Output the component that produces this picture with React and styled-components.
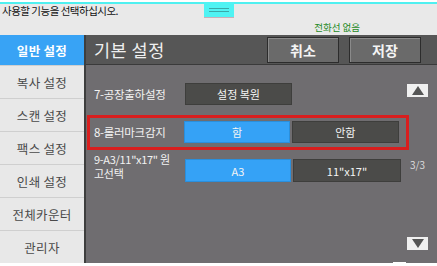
import React from 'react';
import styled, { createGlobalStyle } from 'styled-components';

const Global = createGlobalStyle`
  html, body { margin: 0; padding: 0; background: #ffffff; }
  * { box-sizing: border-box; }
  body { font-family: "Noto Sans CJK KR", "Noto Sans", sans-serif; }
`;

const Screen = styled.div`
  width: 437px;
  height: 266px;
  background: #ffffff;
  position: relative;
  overflow: hidden;
  display: flex;
  flex-direction: column;
`;

const TopBar = styled.div`
  height: 35px;
  position: relative;
  background: #e9e9e9;
  border-top: 2px solid #ffffff;
  padding: 2px 2px 0 2px;
  display: flex;
  flex-direction: column;
  &::before {
    content: "";
    position: absolute;
    left: 0;
    right: 0;
    top: 0;
    height: 2px;
    background: #4ff0f0;
  }
`;

const Message = styled.div`
  font-size: 10.5px;
  letter-spacing: -0.5px;
  color: #111;
  line-height: 14px;
`;

const LineStatus = styled.div`
  align-self: flex-end;
  margin-right: 75px;
  margin-top: 4px;
  font-size: 9.5px;
  color: #1f8a1f;
  line-height: 10px;
`;

const Handle = styled.div`
  position: absolute;
  left: 204px;
  top: 0;
  width: 30px;
  height: 15px;
  background: #4ff3f3;
  box-shadow: 0 1px 0 #c8b0b8;
  display: flex;
  flex-direction: column;
  align-items: center;
  justify-content: center;
  gap: 2px;
  span {
    display: block;
    width: 20px;
    height: 1px;
    background: #3aa8a8;
  }
`;

const Body = styled.div`
  display: flex;
  height: 228px;
`;

const Sidebar = styled.div`
  width: 86px;
  display: flex;
  flex-direction: column;
  background: #e6e6e6;
  border-right: 2px solid #3e3e3e;
`;

const SideItem = styled.div`
  height: ${(p) => (p.$active ? 30 : 33)}px;
  display: flex;
  align-items: center;
  justify-content: center;
  font-size: 12.5px;
  font-weight: ${(p) => (p.$active ? 700 : 400)};
  color: ${(p) => (p.$active ? '#ffffff' : '#4a4a4a')};
  background: ${(p) => (p.$active ? '#38a3f5' : '#e8e8e8')};
  border-top: ${(p) => (p.$active ? 'none' : '1px solid #cfcfcf')};
  letter-spacing: 0.3px;
`;

const Main = styled.div`
  flex: 1;
  display: flex;
  flex-direction: column;
`;

const Header = styled.div`
  height: 30px;
  background: #565656;
  border-bottom: 1px solid #3a3a3a;
  display: flex;
  align-items: center;
  padding: 0 16px 0 8px;
  gap: 10px;
`;

const Title = styled.div`
  flex: 1;
  color: #efefef;
  font-size: 17.5px;
  letter-spacing: 0.5px;
`;

const HeadButton = styled.div`
  width: 72px;
  height: 26px;
  background: #6a6a6a;
  border: 1px solid #2c2c2c;
  box-shadow: inset 1px 1px 0 #8a8a8a;
  color: #f4f4f4;
  font-weight: 700;
  font-size: 14px;
  display: flex;
  align-items: center;
  justify-content: center;
`;

const Content = styled.div`
  flex: 1;
  background: #6f6d70;
  display: flex;
`;

const Rows = styled.div`
  width: 323px;
  padding-top: 18px;
  display: flex;
  flex-direction: column;
`;

const Row = styled.div`
  display: flex;
  align-items: center;
  padding-left: 8px;
  margin-bottom: ${(p) => p.$gap || 0}px;
`;

const Highlight = styled.div`
  display: flex;
  align-items: center;
  margin-left: 1px;
  width: 322px;
  height: 35px;
  border: 3px solid #d81e1e;
  padding: 3px 5px 4px 4px;
  margin-bottom: 9px;
`;

const Label = styled.div`
  width: 91px;
  color: #f2f2f2;
  font-size: 11.5px;
  line-height: 13px;
  letter-spacing: -0.3px;
  margin-top: ${(p) => p.$shift || 0}px;
  display: flex;
  flex-direction: column;
  span {
    display: block;
    font-size: 11px;
    height: 14px;
    line-height: 14px;
    white-space: nowrap;
  }
`;

const Choice = styled.div`
  width: ${(p) => p.$w || 106}px;
  height: ${(p) => p.$h || 22}px;
  margin-right: 2px;
  background: ${(p) => (p.$on ? '#35a2f6' : '#4b4b49')};
  border: 1px solid ${(p) => (p.$on ? '#2a8fdc' : '#3e3e3c')};
  color: #f4f4f4;
  font-size: 11px;
  display: flex;
  align-items: center;
  justify-content: center;
`;

const Scroll = styled.div`
  width: 26px;
  display: flex;
  flex-direction: column;
  padding: 19px 0 13px 0;
  margin-left: -2px;
`;

const Arrow = styled.div`
  width: 21px;
  height: 13px;
  background: #f0f0f0;
  display: flex;
  align-items: center;
  justify-content: center;
  margin-top: ${(p) => (p.$down ? 'auto' : '0')};
  &::after {
    content: "";
    width: 0;
    height: 0;
    border-left: 6px solid transparent;
    border-right: 6px solid transparent;
    ${(p) => (p.$down ? 'border-top' : 'border-bottom')}: 9px solid #555;
  }
`;

const Page = styled.div`
  margin-top: 62px;
  padding-left: 3px;
  color: #dcdcdc;
  font-size: 10px;
  line-height: 12px;
`;

const Notch = styled.div`
  position: absolute;
  left: 393px;
  top: 262px;
  width: 13px;
  height: 4px;
  background: #ffffff;
`;

const sideItems = ['복사 설정', '스캔 설정', '팩스 설정', '인쇄 설정', '전체카운터', '관리자'];

export default function App() {
  return (
    <>
      <Global />
      <Screen>
        <TopBar>
          <Message>사용할 기능을 선택하십시오.</Message>
          <LineStatus>전화선 없음</LineStatus>
          <Handle>
            <span />
            <span />
          </Handle>
        </TopBar>
        <Body>
          <Sidebar>
            <SideItem $active>일반 설정</SideItem>
            {sideItems.map((s) => (
              <SideItem key={s}>{s}</SideItem>
            ))}
          </Sidebar>
          <Main>
            <Header>
              <Title>기본 설정</Title>
              <HeadButton>취소</HeadButton>
              <HeadButton>저장</HeadButton>
            </Header>
            <Content>
              <Rows>
                <Row $gap={10}>
                  <Label>7-공장출하설정</Label>
                  <Choice $w={107}>설정 복원</Choice>
                </Row>
                <Highlight>
                  <Label>8-롤러마크감지</Label>
                  <Choice $on>함</Choice>
                  <Choice $w={108}>안함</Choice>
                </Highlight>
                <Row>
                  <Label $shift={-9}>
                    <span>9-A3/11"x17" 원</span>
                    <span>고선택</span>
                  </Label>
                  <Choice $on $h={23}>A3</Choice>
                  <Choice $w={108} $h={23}>11"x17"</Choice>
                </Row>
              </Rows>
              <Scroll>
                <Arrow />
                <Page>3/3</Page>
                <Arrow $down />
              </Scroll>
            </Content>
          </Main>
        </Body>
        <Notch />
      </Screen>
    </>
  );
}
